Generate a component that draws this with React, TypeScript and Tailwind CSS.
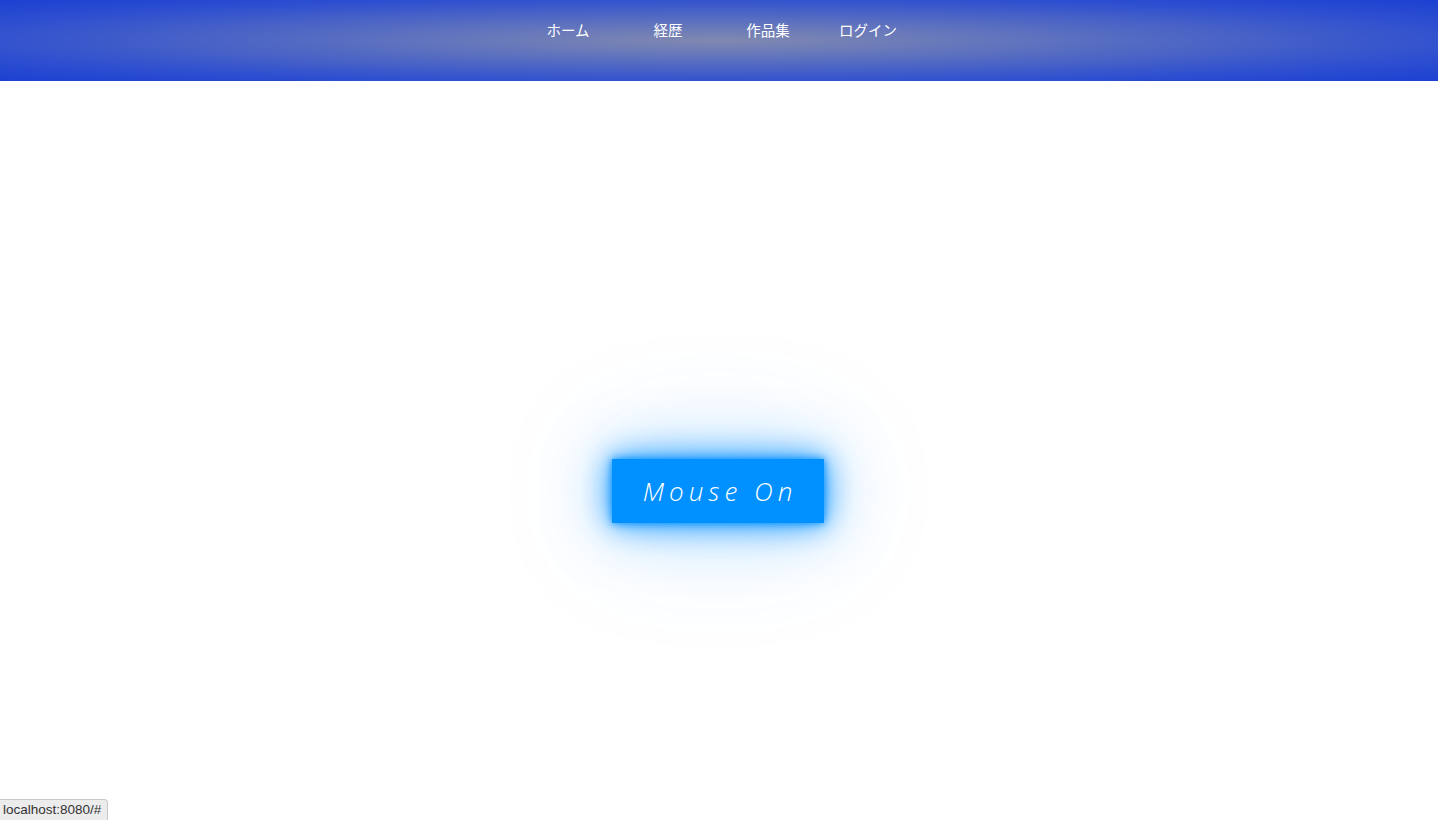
const navItems = ["ホーム", "経歴", "作品集", "ログイン"];

export default function App() {
  return (
    <div className="min-h-screen bg-white font-['Noto_Sans','Noto_Sans_CJK_JP',sans-serif]">
      <header className="h-[81px] bg-[radial-gradient(ellipse_at_center,#8189b0_0%,#5a6fc0_35%,#2e4fd0_75%,#1c40d2_100%)]">
        <ul className="flex justify-center pt-[18px] pr-[2px]">
          {navItems.map((item) => (
            <li key={item} className="w-[100px] text-center">
              <a href="#" className="text-[14.5px] leading-[22px] text-white">
                {item}
              </a>
            </li>
          ))}
        </ul>
      </header>

      <main className="flex justify-center pt-[378px] pr-[2px]">
        <a
          href="#"
          className="flex h-[64px] w-[212px] items-center justify-center bg-[#0090ff] pl-[4px] font-['Open_Sans',sans-serif] text-[26px] font-light italic tracking-[5px] text-white shadow-[0_0_8px_#0090ff,0_0_28px_rgba(0,144,255,0.9),0_0_60px_rgba(0,144,255,0.5),0_0_130px_rgba(0,144,255,0.18)]"
        >
          Mouse On
        </a>
      </main>

      <div className="fixed bottom-0 left-0 h-[21px] rounded-tr-[4px] border-t border-r border-[#c8c8c8] bg-[#ececec] pl-[3px] pr-[6px] font-['Liberation_Sans',sans-serif] text-[13.5px] leading-[20px] text-[#333]">
        localhost:8080/#
      </div>
    </div>
  );
}
